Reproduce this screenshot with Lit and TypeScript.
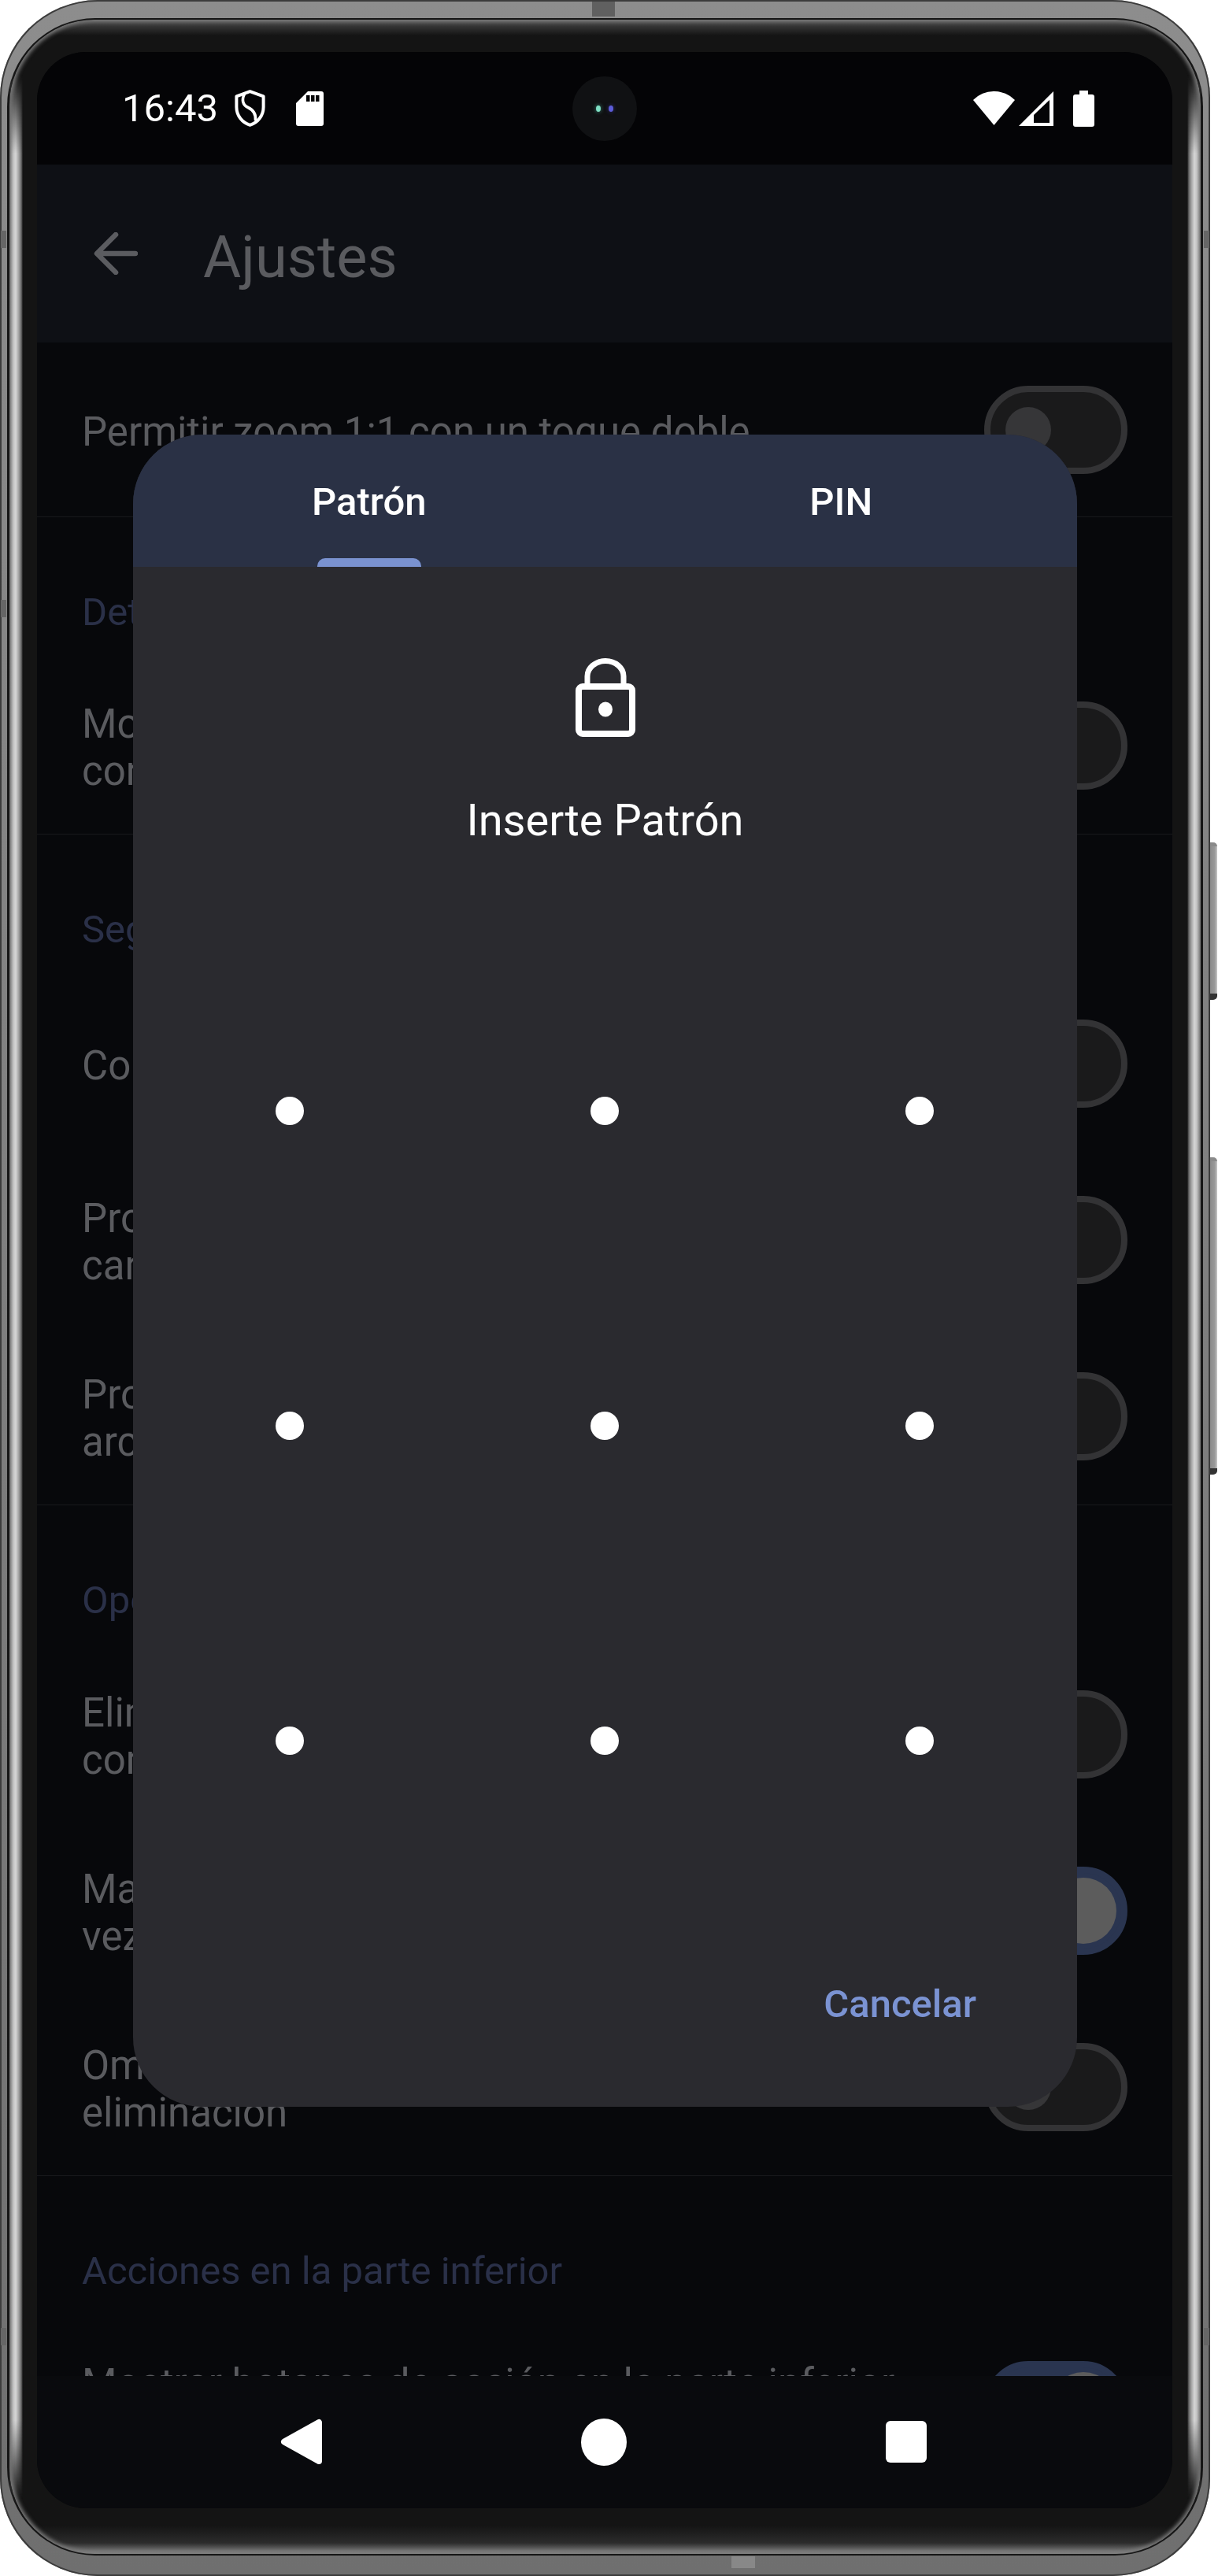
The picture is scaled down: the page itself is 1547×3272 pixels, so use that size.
import { LitElement, html, css, svg } from 'lit'
import { customElement } from 'lit/decorators.js'

type Row = { lines: string[]; on?: boolean }
type Section = { title?: string; short?: boolean; rows: Row[] }

const sections: Section[] = [
    { rows: [{ lines: ['Permitir zoom 1:1 con un toque doble'] }] },
    {
        title: 'Detalles',
        short: true,
        rows: [{ lines: ['Mostrar metadatos de la imagen', 'con un toque'] }]
    },
    {
        title: 'Seguridad',
        rows: [
            { lines: ['Confirmar antes de eliminar'] },
            { lines: ['Proteger la aplicación y las', 'carpetas ocultas'] },
            { lines: ['Proteger la eliminación de', 'archivos con un patrón'] }
        ]
    },
    {
        title: 'Opciones de borrado',
        rows: [
            { lines: ['Eliminar carpetas vacías tras', 'completar la limpieza'] },
            { lines: ['Mantener la papelera durante una', 'vez al mes'], on: true },
            { lines: ['Omitir la confirmación de', 'eliminación'] }
        ]
    }
]

const dots = Array.from({ length: 9 })

@customElement('app-root')
export class AppRoot extends LitElement {
    static styles = css`
        :host {
            display: block;
            position: relative;
            width: 1547px;
            height: 3272px;
            background: #fff;
            font-family: Roboto, 'Liberation Sans', sans-serif;
            overflow: hidden;
        }

        .key {
            position: absolute;
            left: 1531px;
            width: 15px;
            border-radius: 0 5px 5px 0;
            background: linear-gradient(90deg, #555, #8c8c8c 45%, #9a9a9a 80%, #c8c8c8);
            border-top: 5px solid #8a8a8a;
            border-bottom: 8px solid #333;
        }

        .key.a {
            top: 1070px;
            height: 187px;
        }

        .key.b {
            top: 1470px;
            height: 390px;
        }

        .frame {
            position: relative;
            box-sizing: border-box;
            width: 1537px;
            height: 3272px;
            padding: 23px 9px 26px 9px;
            border-radius: 124px;
            background: linear-gradient(180deg, #8d8d8d, #7c7c7c 60%, #6f6f6f);
            box-shadow: inset 0 0 0 2px #3c3c3c;
        }

        .rim {
            box-sizing: border-box;
            height: 100%;
            padding: 2px 3px 2px 3px;
            border-radius: 112px;
            background: #161616;
        }

        .glass {
            position: relative;
            box-sizing: border-box;
            height: 100%;
            padding: 41px 36px 58px 35px;
            border-radius: 108px;
            background:
                linear-gradient(180deg, #4c4c4c, #141414) 0 0 / 100% 20px no-repeat,
                linear-gradient(0deg, #8a8a8a, #2c2c2c 14px, #141414) 0 100% / 100% 36px no-repeat,
                #141414;
            box-shadow: inset 0 0 5px 3px #7a7a7a;
        }

        .glass::before {
            content: '';
            position: absolute;
            inset: 0;
            background:
                linear-gradient(90deg, #6d6d6d, #c4c4c4 5px, #d6d6d6 8px, #a0a0a0 12px, #6a6a6a 15px, #141414 17px) 0 0 / 17px 100% no-repeat,
                linear-gradient(270deg, #6d6d6d, #c4c4c4 5px, #d6d6d6 8px, #a0a0a0 12px, #6a6a6a 15px, #141414 17px) 100% 0 / 17px 100% no-repeat;
            -webkit-mask-image: linear-gradient(180deg, transparent 70px, #000 170px, #000 calc(100% - 170px), transparent calc(100% - 70px));
            mask-image: linear-gradient(180deg, transparent 70px, #000 170px, #000 calc(100% - 170px), transparent calc(100% - 70px));
        }

        .band {
            position: absolute;
        }

        .band.top {
            left: 752px;
            top: 2px;
            width: 29px;
            height: 19px;
            background: #606060;
        }

        .band.bottom {
            left: 929px;
            top: 3247px;
            width: 30px;
            height: 15px;
            background: #888;
        }

        .band.side {
            width: 7px;
            height: 22px;
            background: #666;
        }

        .screen {
            position: relative;
            display: flex;
            flex-direction: column;
            height: 100%;
            border-radius: 62px;
            overflow: hidden;
            background: #07080b;
            color: #5a5b5f;
        }

        .status {
            flex: none;
            display: flex;
            align-items: center;
            height: 143px;
            padding: 0 99px 0 108px;
            box-sizing: border-box;
            background: #040406;
            color: #fff;
        }

        .time {
            width: 143px;
            font-size: 49px;
            line-height: 1;
        }

        .status svg {
            display: block;
            fill: #fff;
        }

        .shield {
            margin-right: 39px;
        }

        .right {
            margin-left: auto;
            display: flex;
            align-items: center;
        }

        .right .wifi {
            margin-right: 5px;
        }

        .right .signal {
            margin-right: 25px;
        }

        .camera {
            position: absolute;
            left: 680px;
            top: 31px;
            width: 82px;
            height: 82px;
            border-radius: 50%;
            background: #101113;
            display: flex;
            align-items: center;
            justify-content: center;
            gap: 10px;
        }

        .lens {
            width: 6px;
            height: 8px;
            border-radius: 50%;
            box-shadow: 0 0 4px 1px currentColor;
        }

        .lens.g {
            background: #7fe0c4;
            color: #2e5f55;
        }

        .lens.v {
            background: #5c5cd8;
            color: #23234f;
        }

        .appbar {
            flex: none;
            display: flex;
            align-items: center;
            gap: 83px;
            box-sizing: border-box;
            height: 226px;
            padding-left: 72px;
            background: #0e1015;
        }

        .title {
            margin-top: 10px;
            font-size: 74px;
            line-height: 80px;
        }

        .list {
            flex: 1;
            min-height: 0;
            overflow: hidden;
        }

        .section {
            border-bottom: 1px solid #18191c;
        }

        .section.first .row {
            height: 221px;
        }

        .heading {
            box-sizing: border-box;
            height: 179px;
            padding: 91px 57px 0;
            font-size: 49px;
            line-height: 60px;
            color: #2a3048;
            white-space: nowrap;
        }

        .section.short .heading {
            height: 178px;
        }

        .row {
            box-sizing: border-box;
            height: 224px;
            display: flex;
            align-items: center;
            justify-content: space-between;
            padding: 0 57px;
        }

        .text {
            padding-top: 6px;
            font-size: 51px;
            line-height: 60px;
            white-space: nowrap;
        }

        .toggle {
            flex: none;
            box-sizing: border-box;
            width: 182px;
            height: 112px;
            display: flex;
            align-items: center;
            justify-content: flex-start;
            padding-left: 19px;
            border: 8px solid #333335;
            border-radius: 56px;
            background: #1a1a1b;
        }

        .knob {
            width: 58px;
            height: 58px;
            border-radius: 50%;
            background: #363638;
        }

        .toggle.on {
            justify-content: flex-end;
            padding: 0 6px 0 0;
            border-color: #2a3550;
            background: #2a3550;
        }

        .toggle.on .knob {
            width: 84px;
            height: 84px;
            background: #5c5c5c;
        }

        .nav {
            flex: none;
            box-sizing: border-box;
            display: grid;
            grid-template-columns: repeat(3, 384px);
            justify-content: center;
            justify-items: center;
            align-items: center;
            height: 168px;
            padding: 0 3px 1px 0;
            background: #090a0d;
        }

        .nav svg {
            display: block;
            fill: #fff;
        }

        .home {
            width: 58px;
            height: 60px;
            border-radius: 50%;
            background: #fff;
        }

        .recent {
            width: 52px;
            height: 53px;
            border-radius: 6px;
            background: #fff;
        }

        .dialog {
            position: absolute;
            left: 122px;
            top: 486px;
            width: 1199px;
            height: 2124px;
            border-radius: 88px;
            overflow: hidden;
            background: #2a2a2f;
            color: #fff;
        }

        .tabs {
            display: grid;
            grid-template-columns: 1fr 1fr;
            height: 168px;
            background: #2a3145;
        }

        .tab {
            display: flex;
            flex-direction: column;
            align-items: center;
            justify-content: space-between;
            padding-top: 58px;
            box-sizing: border-box;
            font-size: 49px;
            line-height: 56px;
            font-weight: 500;
        }

        .indicator {
            width: 132px;
            height: 11px;
            border-radius: 10px 10px 0 0;
            background: #7a92d0;
        }

        .body {
            display: flex;
            flex-direction: column;
            align-items: center;
        }

        .lock {
            display: block;
            margin-top: 116px;
        }

        .prompt {
            margin-top: 74px;
            font-size: 56px;
            line-height: 64px;
        }

        .pattern {
            margin: 137px 0 0 -2px;
            display: grid;
            grid-template-columns: repeat(3, 400px);
            grid-auto-rows: 400px;
            justify-content: center;
            justify-items: center;
            align-items: center;
            width: 100%;
        }

        .dot {
            width: 36px;
            height: 36px;
            border-radius: 50%;
            background: #fff;
        }

        .actions {
            align-self: stretch;
            margin-top: 105px;
            padding-right: 128px;
            text-align: right;
            font-size: 49px;
            line-height: 60px;
            font-weight: 500;
            color: #7b93d3;
        }
    `

    renderSection(section: Section, index: number) {
        const classes = `section${index === 0 ? ' first' : ''}${section.short ? ' short' : ''}`
        return html`
            <div class=${classes}>
                ${section.title ? html`<div class="heading">${section.title}</div>` : ''}
                ${section.rows.map((row) => this.renderRow(row))}
            </div>
        `
    }

    renderRow(row: Row) {
        return html`
            <div class="row">
                <div class="text">${row.lines.map((line, i) => html`${i ? html`<br />` : ''}${line}`)}</div>
                <div class="toggle ${row.on ? 'on' : ''}"><div class="knob"></div></div>
            </div>
        `
    }

    render() {
        return html`
            <div class="key a"></div>
            <div class="key b"></div>
            <div class="frame">
                <div class="rim">
                    <div class="glass">
                        <div class="screen">
                            <div class="status">
                                <span class="time">16:43</span>
                                <svg class="shield" width="39" height="47" viewBox="0 0 39 47">
                                    <path d="M19.5 2.2 36.6 8.4V22c0 10.8-7 19.4-17.1 22.8C9.400 41.400 2.400 32.800 2.400 22V8.400Z" fill="none" stroke="#fff" stroke-width="4" stroke-linejoin="round" />
                                    <path d="M12.500 5.500C8.500 13 10.500 19.500 17 22.500c7 3.300 10.500 8 9.500 17" fill="none" stroke="#fff" stroke-width="3.600" />
                                </svg>
                                <svg width="35" height="44" viewBox="0 0 35 44">
                                    <path fill-rule="evenodd" d="M15 0h17a3 3 0 0 1 3 3v38a3 3 0 0 1-3 3H3a3 3 0 0 1-3-3V15ZM13 5v8h4.500V5Zm6 0v8h4.500V5Zm6 0v8h4.500V5Z" />
                                </svg>
                                <div class="right">
                                    <svg class="wifi" width="53" height="43" viewBox="0 0 53 43">
                                        <path d="M0 11A37.400 37.400 0 0 1 53 11L26.500 43Z" />
                                    </svg>
                                    <svg class="signal" width="44" height="44" viewBox="0 0 44 44">
                                        <path fill-rule="evenodd" d="M44 0V44H0ZM39 11 19 30V40H39Z" />
                                    </svg>
                                    <svg width="27" height="46" viewBox="0 0 27 46">
                                        <path d="M8 0h11v5h5a3 3 0 0 1 3 3v35a3 3 0 0 1-3 3H3a3 3 0 0 1-3-3V8a3 3 0 0 1 3-3h5Z" />
                                    </svg>
                                </div>
                            </div>
                            <div class="camera"><span class="lens g"></span><span class="lens v"></span></div>
                            <div class="appbar">
                                <svg width="56" height="54" viewBox="0 0 56 54">
                                    <path d="M53 27H5M28 3 4 27l24 24" fill="none" stroke="#5b5c60" stroke-width="6.500" stroke-linecap="round" stroke-linejoin="round" />
                                </svg>
                                <span class="title">Ajustes</span>
                            </div>
                            <div class="list">
                                ${sections.map((s, i) => this.renderSection(s, i))}
                                <div class="section">
                                    <div class="heading">Acciones en la parte inferior</div>
                                    ${this.renderRow({ lines: ['Mostrar botones de acción en la parte inferior', 'de la pantalla'], on: true })}
                                </div>
                            </div>
                            <div class="nav">
                                <svg width="54" height="59" viewBox="0 0 54 59">
                                    <polygon points="49,5 49,54 5,29.500" stroke="#fff" stroke-width="8" stroke-linejoin="round" />
                                </svg>
                                <div class="home"></div>
                                <div class="recent"></div>
                            </div>
                            <div class="dialog">
                                <div class="tabs">
                                    <div class="tab"><span>Patrón</span><div class="indicator"></div></div>
                                    <div class="tab"><span>PIN</span></div>
                                </div>
                                <div class="body">
                                    <svg class="lock" width="76" height="100" viewBox="0 0 76 100">
                                        ${svg`<path d="M15 36V23a23 19.500 0 0 1 46 0V36" fill="none" stroke="#fff" stroke-width="7" />
                                        <rect x="4" y="36" width="68" height="60" rx="5" fill="none" stroke="#fff" stroke-width="8" />
                                        <ellipse cx="38" cy="65" rx="9" ry="9.500" fill="#fff" />`}
                                    </svg>
                                    <div class="prompt">Inserte Patrón</div>
                                    <div class="pattern">${dots.map(() => html`<div class="dot"></div>`)}</div>
                                    <div class="actions">Cancelar</div>
                                </div>
                            </div>
                        </div>
                    </div>
                </div>
                <div class="band top"></div>
                <div class="band bottom"></div>
                <div class="band side" style="left:1px;top:293px"></div>
                <div class="band side" style="left:1px;top:762px"></div>
                <div class="band side" style="left:1px;top:2957px"></div>
                <div class="band side" style="left:1529px;top:293px"></div>
                <div class="band side" style="left:1529px;top:2957px"></div>
            </div>
        `
    }
}
